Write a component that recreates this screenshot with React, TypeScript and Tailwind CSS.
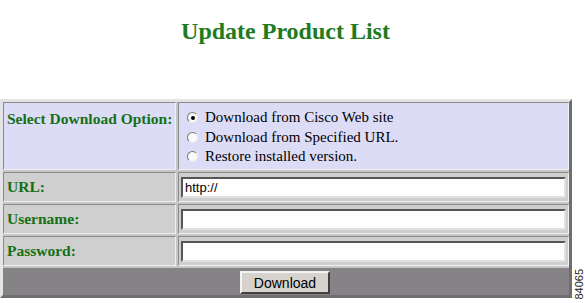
export default function App() {
  const serif = { fontFamily: '"Liberation Serif", "Times New Roman", serif' };
  const sans = { fontFamily: '"Liberation Sans", Arial, sans-serif' };
  const cell = "border border-t-[#8a8a8a] border-l-[#8a8a8a] border-r-[#f0f0f0] border-b-[#f0f0f0]";
  const label = "text-[#157015] font-bold text-[15.5px] px-[3px] whitespace-nowrap";
  const input =
    "w-full h-[21px] bg-white border-2 border-t-[#555] border-l-[#555] border-r-[#e0e0e0] border-b-[#e0e0e0] px-[2px] text-[13px] text-black outline-none";

  const Radio = ({ checked }: { checked?: boolean }) => (
    <span className="inline-flex w-[11px] h-[11px] rounded-full bg-[#fafafa] border border-t-[#7a7a7a] border-l-[#7a7a7a] border-r-[#e8e8e8] border-b-[#e8e8e8] items-center justify-center mr-[7px] shrink-0">
      {checked && <span className="w-[4px] h-[4px] rounded-full bg-black" />}
    </span>
  );

  return (
    <div className="w-[585px] h-[303px] bg-white relative overflow-hidden" style={serif}>
      <h1 className="text-center text-[24px] font-bold text-[#1e7b1e] pt-[16px] leading-[30px] pr-[14px]">
        Update Product List
      </h1>

      <div className="mt-[53px] w-[572px] border-[3px] border-t-[#e4e4e4] border-l-[#e4e4e4] border-r-[#6e6e6e] border-b-[#6e6e6e] bg-[#c6c6c6]">
        <div className="grid grid-cols-[173px_1fr] grid-rows-[68px_30px_30px_30px_27px] gap-[2px]">
          <div className={`${cell} bg-[#dddcf7] pt-[4px] ${label}`}>Select Download Option:</div>
          <div className={`${cell} bg-[#dddcf7] pl-[8px] pt-[5px] text-[15px] leading-[19.5px] text-black`}>
            <div className="flex items-center"><Radio checked />Download from Cisco Web site</div>
            <div className="flex items-center"><Radio />Download from Specified URL.</div>
            <div className="flex items-center"><Radio />Restore installed version.</div>
          </div>

          <div className={`${cell} bg-[#cfcfcf] flex items-center ${label}`}>URL:</div>
          <div className={`${cell} bg-[#cfcfcf] flex items-center px-[2px]`}>
            <input className={input} style={sans} defaultValue="http://" />
          </div>

          <div className={`${cell} bg-[#cfcfcf] flex items-center ${label}`}>Username:</div>
          <div className={`${cell} bg-[#cfcfcf] flex items-center px-[2px]`}>
            <input className={input} style={sans} />
          </div>

          <div className={`${cell} bg-[#cfcfcf] flex items-center ${label}`}>Password:</div>
          <div className={`${cell} bg-[#cfcfcf] flex items-center px-[2px]`}>
            <input className={input} style={sans} />
          </div>

          <div className="col-span-2 bg-[#858385] flex justify-center items-center">
            <button
              className="w-[90px] h-[23px] bg-[#d6d3ce] border-2 border-t-[#f4f4f4] border-l-[#f4f4f4] border-r-[#404040] border-b-[#404040] text-[14px] leading-none text-black ml-[-2px] mt-[2px]"
              style={sans}
            >
              Download
            </button>
          </div>
        </div>
      </div>

      <div
        className="absolute right-[0px] bottom-[3px] text-[11px] text-[#222] leading-none"
        style={{ ...sans, writingMode: "vertical-rl", transform: "rotate(180deg)" }}
      >
        84065
      </div>
    </div>
  );
}
